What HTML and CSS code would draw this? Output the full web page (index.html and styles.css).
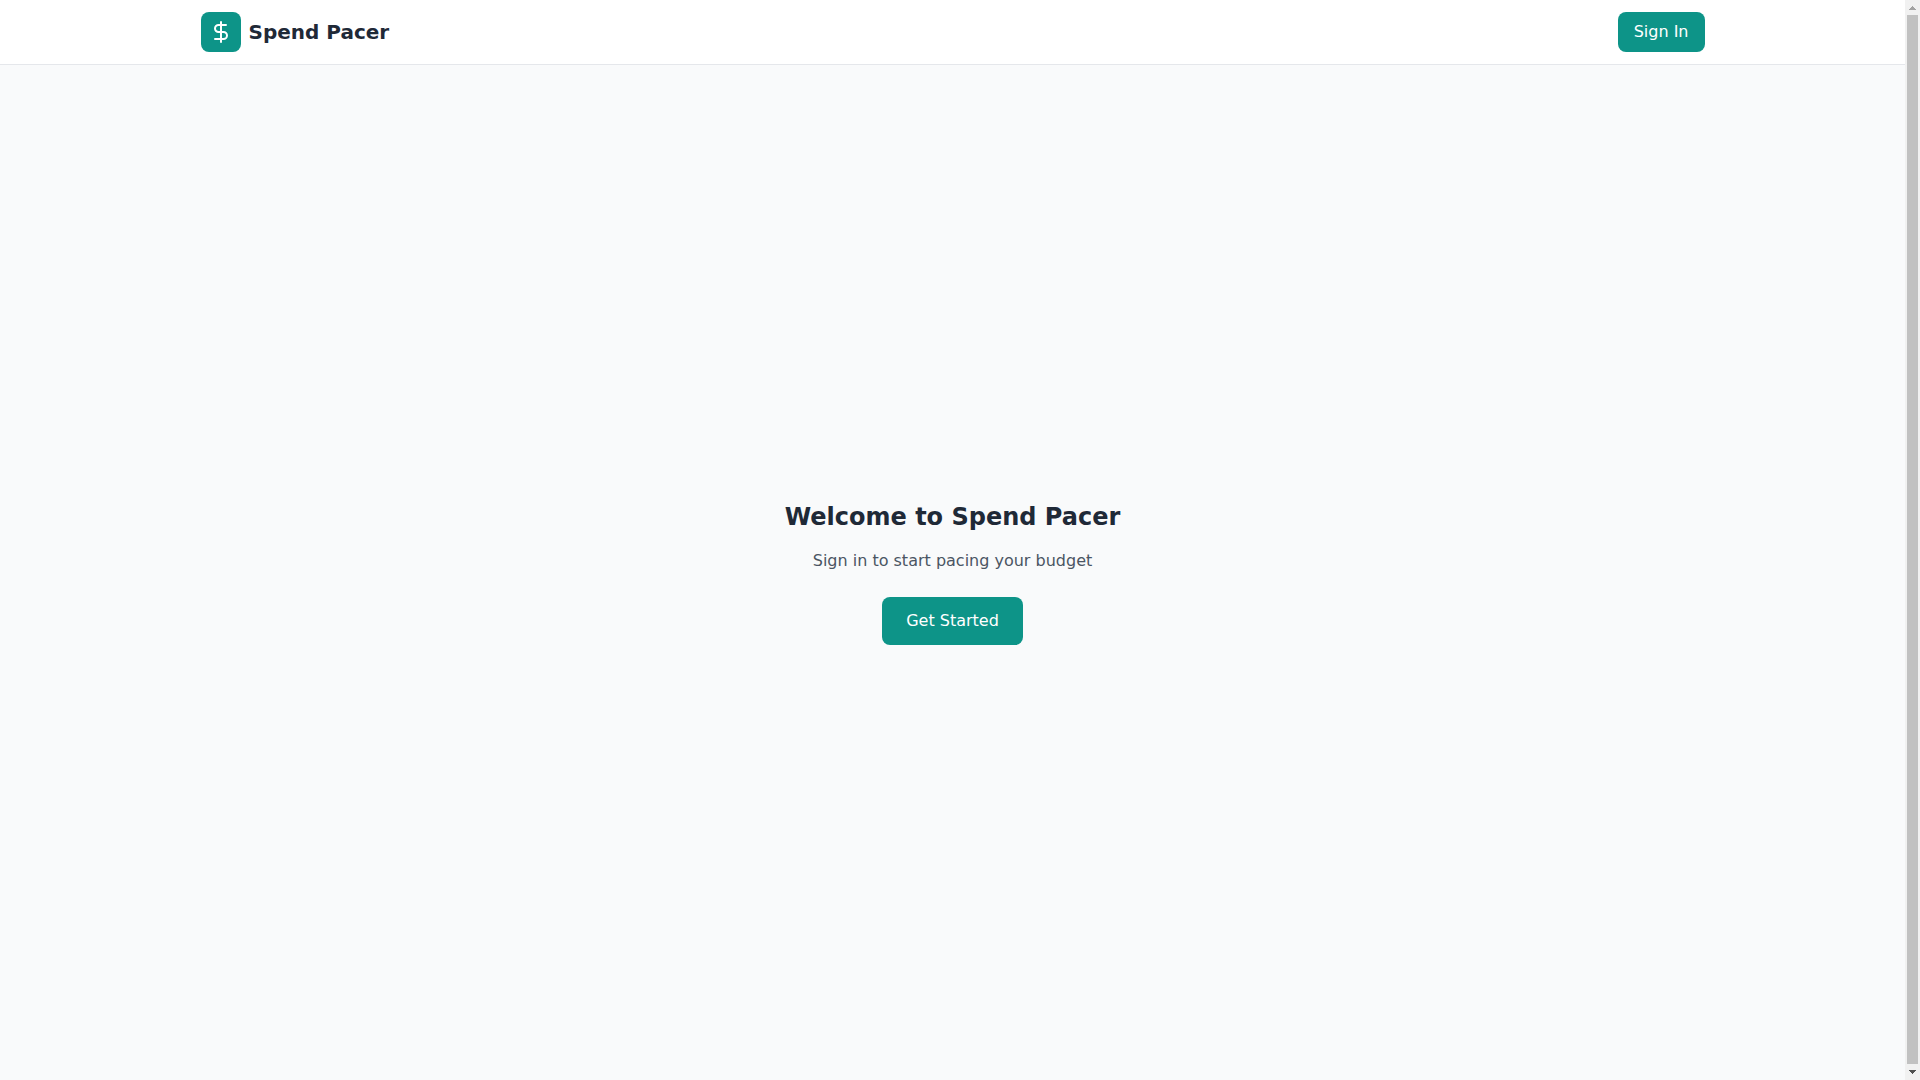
FILE: index.html
```html
<!DOCTYPE html>
<html lang="en">
<head>
<meta charset="utf-8">
<title>Spend Pacer</title>
<link rel="stylesheet" href="styles.css">
</head>
<body>
<div class="page">
  <header class="header">
    <div class="header-inner">
      <div class="brand">
        <span class="brand-mark">
          <svg width="24" height="24" viewBox="0 0 24 24" fill="none" stroke="currentColor" stroke-width="2" stroke-linecap="round" stroke-linejoin="round"><line x1="12" x2="12" y1="2" y2="22"/><path d="M17 5H9.5a3.5 3.5 0 0 0 0 7h5a3.5 3.5 0 0 1 0 7H6"/></svg>
        </span>
        <h1 class="brand-name">Spend Pacer</h1>
      </div>
      <button class="button">Sign In</button>
    </div>
  </header>
  <main class="main">
    <div class="welcome">
      <h2 class="welcome-title">Welcome to Spend Pacer</h2>
      <p class="welcome-text">Sign in to start pacing your budget</p>
      <button class="button button-large">Get Started</button>
    </div>
  </main>
</div>
<div class="scrollbar" aria-hidden="true">
  <svg class="scroll-arrow arrow-up" width="15" height="15" viewBox="0 0 15 15" shape-rendering="crispEdges"><path d="M7 6h1v1h1v1h1v1h1v1H4V9h1V8h1V7h1z"/></svg>
  <div class="scroll-thumb"></div>
  <svg class="scroll-arrow arrow-down" width="15" height="15" viewBox="0 0 15 15" shape-rendering="crispEdges"><path d="M4 5h7v1h-1v1H9v1H8v1H7V8H6V7H5V6H4z"/></svg>
</div>
</body>
</html>
```
FILE: styles.css
```css
* {
  box-sizing: border-box;
  margin: 0;
  padding: 0;
}

body {
  display: flex;
  height: 100vh;
  overflow: hidden;
  font: 16px/24px "DejaVu Sans", sans-serif;
  color: #1f2937;
}

.page {
  flex: 1;
  display: flex;
  flex-direction: column;
  background: #f9fafb;
}

.header {
  background: #fff;
  border-bottom: 1px solid #e5e7eb;
}

.header-inner {
  display: flex;
  align-items: center;
  justify-content: space-between;
  max-width: 1536px;
  margin: 0 auto;
  padding: 12px 16px;
}

.brand {
  display: flex;
  align-items: center;
  gap: 8px;
}

.brand-mark {
  display: flex;
  padding: 8px;
  border-radius: 8px;
  background: #0d9488;
  color: #fff;
}

.brand-name {
  font-size: 20px;
  line-height: 28px;
  font-weight: 700;
}

.button {
  border: 0;
  border-radius: 8px;
  padding: 8px 16px;
  background: #0d9488;
  color: #fff;
  font: inherit;
}

.button-large {
  padding: 12px 24px;
}

.main {
  flex: 1;
  display: flex;
  align-items: center;
  justify-content: center;
}

.welcome {
  text-align: center;
}

.welcome-title {
  margin-bottom: 16px;
  font-size: 24px;
  line-height: 32px;
  font-weight: 700;
}

.welcome-text {
  margin-bottom: 24px;
  color: #4b5563;
}

.scrollbar {
  display: flex;
  flex-direction: column;
  width: 15px;
  background: #f1f1f1;
}

.scroll-thumb {
  flex: 1;
  margin: 0 2px 1px;
  background: #c1c1c1;
}

.scroll-arrow {
  display: block;
}

.arrow-up {
  fill: #a3a3a3;
}

.arrow-down {
  fill: #505050;
}
```
